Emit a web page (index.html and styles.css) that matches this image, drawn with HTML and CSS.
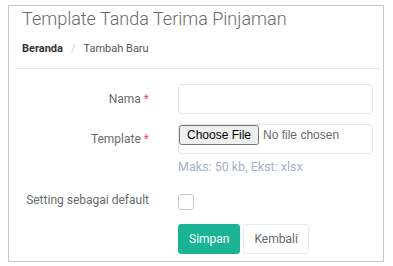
FILE: index.html
```html
<!DOCTYPE html>
<html lang="id">
<head>
  <meta charset="UTF-8">
  <meta name="viewport" content="width=device-width, initial-scale=1.0">
  <title>Template Tanda Terima Pinjaman</title>
  <link rel="stylesheet" href="styles.css">
</head>
<body>
  <div class="panel">
    <div class="panel-head">
      <h1>Template Tanda Terima Pinjaman</h1>
      <ol class="breadcrumb">
        <li class="active-crumb">Beranda</li>
        <li class="sep">/</li>
        <li>Tambah Baru</li>
      </ol>
    </div>

    <form class="form">
      <div class="form-row">
        <label for="nama">Nama <span class="req">*</span></label>
        <input type="text" id="nama" class="form-control">
      </div>
      <div class="form-row">
        <label for="template">Template <span class="req">*</span></label>
        <div>
          <input type="file" id="template" class="file-control">
          <p class="help">Maks: 50 kb, Ekst: xlsx</p>
        </div>
      </div>
      <div class="form-row check-row">
        <label for="default">Setting sebagai default</label>
        <span class="checkbox"></span>
      </div>
      <div class="form-row">
        <span></span>
        <div class="actions">
          <button type="button" class="btn btn-primary">Simpan</button>
          <button type="button" class="btn btn-white">Kembali</button>
        </div>
      </div>
    </form>
  </div>
</body>
</html>
```

FILE: styles.css
```css
* {
  margin: 0;
  padding: 0;
  box-sizing: border-box;
}

body {
  font-family: Roboto, 'Liberation Sans', Arial, sans-serif;
  font-size: 12px;
  color: #676a6c;
  background: #fff;
  padding: 5px 9px 5px 8px;
}

.panel {
  border: 1px solid #c8c8c8;
  height: 257px;
  overflow: hidden;
}

.panel-head {
  margin: 0 4px 0 7px;
  border-bottom: 1px solid #e7eaec;
  padding: 1px 0 0 6px;
  height: 63px;
}

.panel-head h1 {
  font-size: 18px;
  font-weight: 300;
  line-height: 24px;
  color: #676a6c;
}

.breadcrumb {
  list-style: none;
  display: flex;
  gap: 8px;
  margin-top: 10px;
  font-size: 11px;
  line-height: 16px;
  color: #555;
}

.active-crumb {
  font-weight: 700;
  color: #333;
}

.sep {
  color: #ccc;
}

.form {
  display: flex;
  flex-direction: column;
  gap: 10px;
  padding: 15px 0 0 6px;
}

.form-row {
  display: grid;
  grid-template-columns: 134px 195px;
  column-gap: 29px;
  align-items: start;
}

.form-row label {
  text-align: right;
  line-height: 30px;
  white-space: nowrap;
}

.req {
  color: #ed5565;
}

.form-control {
  height: 30px;
  width: 195px;
  border: 1px solid #e5e6e7;
  border-radius: 3px;
}

.file-control {
  display: block;
  width: 195px;
  height: 30px;
  border: 1px solid #e5e6e7;
  border-radius: 3px;
  font-family: 'Liberation Sans', Arial, sans-serif;
  font-size: 12px;
}

.help {
  margin-top: 5px;
  font-size: 12.5px;
  color: #a7b1c2;
  line-height: 16px;
}

.check-row {
  margin-top: 9px;
}

.check-row label {
  line-height: 16px;
  margin-top: -2px;
}

.checkbox {
  width: 16px;
  height: 16px;
  border: 1px solid #c8c8c8;
  border-radius: 3px;
}

.actions {
  display: flex;
  gap: 3px;
  margin-top: 4px;
}

.btn {
  height: 30px;
  padding: 0 10px;
  border-radius: 3px;
  font-family: Roboto, sans-serif;
  font-size: 12px;
  cursor: pointer;
}

.btn-primary {
  background: #1ab394;
  border: 1px solid #1ab394;
  color: #fff;
}

.btn-white {
  background: #fff;
  border: 1px solid #e7eaec;
  color: #676a6c;
}
```
